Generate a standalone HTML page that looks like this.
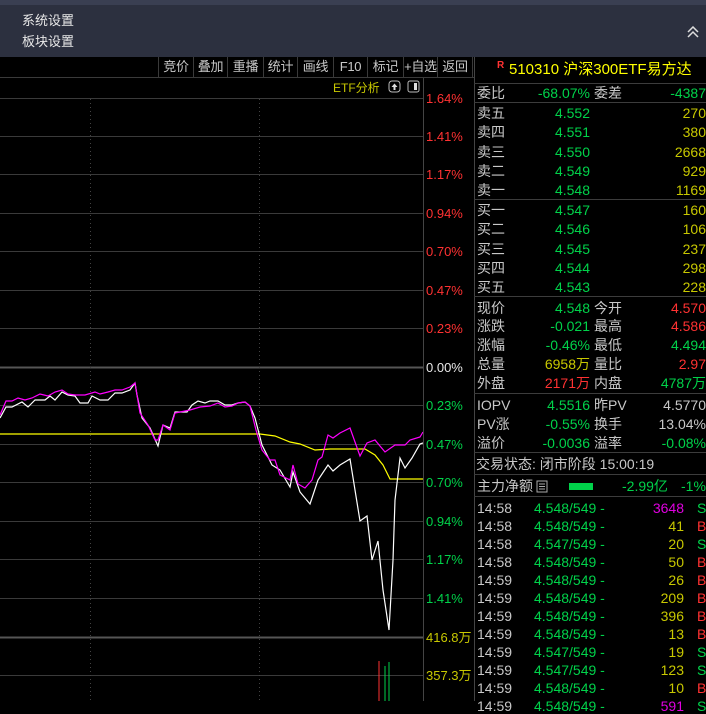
<!DOCTYPE html>
<html><head><meta charset="utf-8"><style>
*{margin:0;padding:0;box-sizing:border-box}
body{width:706px;height:701px;background:#000;overflow:hidden;position:relative;font-family:"Liberation Sans","Noto Sans CJK SC",sans-serif;font-size:13px;color:#c8c8c8}
.a{position:absolute;white-space:nowrap;line-height:16px}
.p{font-size:14px}
.hdr{position:absolute;left:0;top:0;width:706px;height:57px;background:#2c303f}
.hdr .tb{position:absolute;left:0;top:0;width:706px;height:5px;background:#3a3f52}
.btn{position:absolute;top:57px;height:21px;line-height:20px;text-align:center;color:#c8c8c8;border-left:1px solid #3a3a3a;white-space:nowrap;overflow:visible;letter-spacing:-0.3px}
.g{color:#00d24a}.r{color:#ff3232}.y{color:#c8c800}.w{color:#c8c8c8}.m{color:#e000e0}
.hl{position:absolute;left:474px;width:232px;height:1px;background:#3c3c3c}
.rt{text-align:right}
</style></head><body>
<div class="hdr"><div class="tb"></div>
<div class="a" style="left:22px;top:13px;color:#e8e8e8">系统设置</div>
<div class="a" style="left:22px;top:34px;color:#e8e8e8">板块设置</div>
<svg class="a" style="left:686px;top:26px" width="14" height="12"><path d="M2 6 L7 1 L12 6 M2 11 L7 6 L12 11" stroke="#ddd" stroke-width="1.5" fill="none"/></svg>
</div>
<div style="position:absolute;left:0;top:77px;width:474px;height:1px;background:#3a3a3a"></div>
<div class="btn" style="left:158px;width:35px">竞价</div>
<div class="btn" style="left:193px;width:34px">叠加</div>
<div class="btn" style="left:227px;width:36px">重播</div>
<div class="btn" style="left:263px;width:34px">统计</div>
<div class="btn" style="left:297px;width:36px">画线</div>
<div class="btn" style="left:333px;width:34px">F10</div>
<div class="btn" style="left:367px;width:36px">标记</div>
<div class="btn" style="left:403px;width:34px">+自选</div>
<div class="btn" style="left:437px;width:36px;border-right:1px solid #3a3a3a">返回</div>
<div style="position:absolute;left:474px;top:57px;width:1px;height:644px;background:#444"></div>
<div style="position:absolute;left:423px;top:78px;width:1px;height:623px;background:#444"></div>
<div class="a y" style="left:333px;top:80px;font-size:12px">ETF分析</div>
<svg class="a" style="left:388px;top:80px" width="34" height="14"><rect x="1" y="1" width="11" height="11" rx="3" stroke="#bbb" fill="none"/><path d="M6.5 3.5 L9.5 7 H7.5 V10 H5.5 V7 H3.5Z" fill="#ddd"/><rect x="20" y="1" width="11" height="11" rx="2" stroke="#bbb" fill="none"/><rect x="26" y="3" width="3" height="7" fill="#ddd"/></svg>
<svg class="a" style="left:0;top:0" width="423" height="701">
<g stroke="#3a3a3a" stroke-width="1">
<line x1="0" y1="98.5" x2="423" y2="98.5"/><line x1="0" y1="136.5" x2="423" y2="136.5"/><line x1="0" y1="174.5" x2="423" y2="174.5"/><line x1="0" y1="213.5" x2="423" y2="213.5"/><line x1="0" y1="251.5" x2="423" y2="251.5"/><line x1="0" y1="290.5" x2="423" y2="290.5"/><line x1="0" y1="328.5" x2="423" y2="328.5"/><line x1="0" y1="405.5" x2="423" y2="405.5"/><line x1="0" y1="444.5" x2="423" y2="444.5"/><line x1="0" y1="482.5" x2="423" y2="482.5"/><line x1="0" y1="521.5" x2="423" y2="521.5"/><line x1="0" y1="559.5" x2="423" y2="559.5"/><line x1="0" y1="598.5" x2="423" y2="598.5"/><line x1="0" y1="675.5" x2="423" y2="675.5"/>
</g>
<line x1="0" y1="367.5" x2="423" y2="367.5" stroke="#555" stroke-width="2"/>
<line x1="0" y1="637.5" x2="423" y2="637.5" stroke="#555" stroke-width="2"/>
<g stroke="#444" stroke-dasharray="1,3"><line x1="90.5" y1="99" x2="90.5" y2="701"/><line x1="259.5" y1="99" x2="259.5" y2="701"/></g>
<polyline fill="none" stroke="#ffff00" stroke-width="1.2" points="0,434 260,434 275,436 290,442 300,444 315,450 330,449 365,449 375,455 383,465 390,479 423,479"/>
<polyline fill="none" stroke="#ffffff" stroke-width="1.2" points="0,418 6,407 12,407 22,402 28,407 35,400 45,400 50,396 55,400 62,392 68,395 75,396 80,403 88,403 92,396 100,400 108,400 115,393 122,393 130,390 135,383 137,395 142,418 150,428 158,446 163,425 170,428 175,412 187,412 192,405 198,401 205,403 210,401 218,401 225,405 232,405 238,403 245,402 250,406 255,418 262,445 272,465 280,470 290,487 293,472 300,492 310,504 318,480 328,465 333,471 340,465 350,459 360,521 367,516 372,560 378,541 383,590 389,630 393,560 395,500 400,458 405,468 412,458 420,444 423,443"/>
<polyline fill="none" stroke="#ff00ff" stroke-width="1.2" points="0,415 6,401 12,401 18,398 25,400 32,398 40,394 48,396 55,392 62,390 68,394 75,395 85,395 95,392 100,394 108,392 115,390 122,390 130,387 135,383 140,413 148,425 155,440 158,440 163,425 170,430 175,413 190,410 200,407 210,406 218,403 225,407 232,406 238,403 245,402 250,406 256,430 262,450 270,460 275,460 280,475 290,480 293,465 298,484 305,488 312,480 318,460 322,457 328,435 333,438 340,433 350,428 360,456 367,443 375,440 385,452 395,445 405,445 410,440 420,437 423,432"/>
<line x1="379" y1="661" x2="379" y2="701" stroke="#ff3232"/><line x1="385" y1="666" x2="385" y2="701" stroke="#00d24a"/><line x1="389" y1="662" x2="389" y2="701" stroke="#00d24a"/>
</svg>
<div class="a r" style="left:426px;top:91px">1.64%</div>
<div class="a r" style="left:426px;top:129px">1.41%</div>
<div class="a r" style="left:426px;top:167px">1.17%</div>
<div class="a r" style="left:426px;top:206px">0.94%</div>
<div class="a r" style="left:426px;top:244px">0.70%</div>
<div class="a r" style="left:426px;top:283px">0.47%</div>
<div class="a r" style="left:426px;top:321px">0.23%</div>
<div class="a" style="left:426px;top:360px;color:#e8e8e8">0.00%</div>
<div class="a g" style="left:426px;top:398px">0.23%</div>
<div class="a g" style="left:426px;top:437px">0.47%</div>
<div class="a g" style="left:426px;top:475px">0.70%</div>
<div class="a g" style="left:426px;top:514px">0.94%</div>
<div class="a g" style="left:426px;top:552px">1.17%</div>
<div class="a g" style="left:426px;top:591px">1.41%</div>
<div class="a y" style="left:426px;top:630px">416.8万</div>
<div class="a y" style="left:426px;top:668px">357.3万</div>

<div class="a r" style="left:497px;top:58px;font-size:10px;font-weight:bold">R</div>
<div class="a" style="left:509px;top:61px;color:#ffff00;font-size:15px;line-height:18px">510310 沪深300ETF易方达</div>
<div class="hl" style="top:83px"></div>
<div class="a p" style="left:477px;top:85px">委比</div><div class="a p g rt" style="left:510px;top:85px;width:80px">-68.07%</div><div class="a p" style="left:594px;top:85px">委差</div><div class="a p g rt" style="left:620px;top:85px;width:86px">-4387</div>
<div class="hl" style="top:102px"></div>
<div id="ob"></div>
<div class="hl" style="top:199px"></div>
<div class="hl" style="top:296px"></div>
<div class="hl" style="top:393px"></div>
<div class="hl" style="top:452px"></div>
<div class="a p" style="left:476px;top:456px">交易状态: 闭市阶段 15:00:19</div>
<div class="hl" style="top:474px"></div>
<div class="a p" style="left:477px;top:478px">主力净额</div>
<svg class="a" style="left:536px;top:480px" width="12" height="13"><rect x="1" y="1" width="10" height="11" stroke="#aaa" fill="none"/><path d="M3 4H9M3 6.5H9M3 9H9" stroke="#aaa"/></svg>
<div style="position:absolute;left:569px;top:483px;width:24px;height:7px;background:#00d24a"></div>
<div class="a p g" style="left:622px;top:478px">-2.99亿</div><div class="a p g" style="left:681px;top:478px">-1%</div>
<div class="hl" style="top:496px"></div>
<script>
var o=document.getElementById('ob').parentNode,h='';
function row(y,l,v,vc,l2,v2,c2){h+='<div class="a p" style="left:477px;top:'+y+'px">'+l+'</div><div class="a p '+vc+' rt" style="left:510px;top:'+y+'px;width:80px">'+v+'</div>';if(l2)h+='<div class="a p" style="left:594px;top:'+y+'px">'+l2+'</div>';h+='<div class="a p '+c2+' rt" style="left:620px;top:'+y+'px;width:86px">'+v2+'</div>';}
var ob=[['卖五','4.552','270'],['卖四','4.551','380'],['卖三','4.550','2668'],['卖二','4.549','929'],['卖一','4.548','1169'],['买一','4.547','160'],['买二','4.546','106'],['买三','4.545','237'],['买四','4.544','298'],['买五','4.543','228']];
var ys=[105,124,144,163,182,202,221,241,260,279];
ob.forEach(function(r,i){row(ys[i],r[0],r[1],'g','',r[2],'y');});
var q=[['现价','4.548','g','今开','4.570','r'],['涨跌','-0.021','g','最高','4.586','r'],['涨幅','-0.46%','g','最低','4.494','g'],['总量','6958万','y','量比','2.97','r'],['外盘','2171万','r','内盘','4787万','g'],['IOPV','4.5516','g','昨PV','4.5770','w'],['PV涨','-0.55%','g','换手','13.04%','w'],['溢价','-0.0036','g','溢率','-0.08%','g']];
var qy=[300,318,337,356,375,397,416,435];
q.forEach(function(r,i){row(qy[i],r[0],r[1],r[2],r[3],r[4],r[5]);});
var t=[['14:58','4.548','3648','m','S'],['14:58','4.548','41','y','B'],['14:58','4.547','20','y','S'],['14:58','4.548','50','y','B'],['14:59','4.548','26','y','B'],['14:59','4.548','209','y','B'],['14:59','4.548','396','y','B'],['14:59','4.548','13','y','B'],['14:59','4.547','19','y','S'],['14:59','4.547','123','y','S'],['14:59','4.548','10','y','B'],['14:59','4.548','591','m','S']];
t.forEach(function(r,i){var y=500+i*18;h+='<div class="a p w" style="left:477px;top:'+y+'px">'+r[0]+'</div><div class="a p g" style="left:534px;top:'+y+'px">'+r[1]+'/549 -</div><div class="a p '+r[3]+' rt" style="left:620px;top:'+y+'px;width:64px">'+r[2]+'</div><div class="a p '+(r[4]=='S'?'g':'r')+'" style="left:697px;top:'+y+'px">'+r[4]+'</div>';});
o.insertAdjacentHTML('beforeend',h);
</script>
</body></html>
